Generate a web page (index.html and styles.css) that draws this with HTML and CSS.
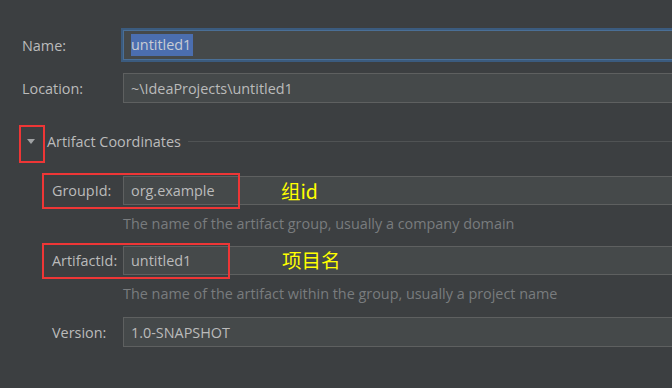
FILE: index.html
```html
<!DOCTYPE html>
<html lang="en">
  <head>
    <meta charset="utf-8" />
    <title>New Project</title>
    <link rel="stylesheet" href="styles.css">
  </head>
  <body>
    <section class="form">
      <div class="row top">
        <label class="label">Name:</label>
        <div class="field focused"><span class="selected">untitled1</span></div>
      </div>
      <div class="row top gap">
        <label class="label">Location:</label>
        <div class="field">~\IdeaProjects\untitled1</div>
      </div>

      <div class="group-title">
        <span class="toggle"></span>
        <span class="title">Artifact Coordinates</span>
        <span class="rule"></span>
        <!-- annotation -->
        <span class="mark mark-toggle"></span>
      </div>

      <div class="group">
        <div class="row sub">
          <label class="label">GroupId:</label>
          <div class="field">org.example</div>
          <span class="mark mark-group"></span>
          <span class="note note-group">组id</span>
        </div>
        <div class="hint">The name of the artifact group, usually a company domain</div>

        <div class="row sub">
          <label class="label">ArtifactId:</label>
          <div class="field">untitled1</div>
          <span class="mark mark-artifact"></span>
          <span class="note note-artifact">项目名</span>
        </div>
        <div class="hint last">The name of the artifact within the group, usually a project name</div>

        <div class="row sub version">
          <label class="label">Version:</label>
          <div class="field">1.0-SNAPSHOT</div>
        </div>
      </div>
    </section>
  </body>
</html>
```
FILE: styles.css
```css
body,
html {
  margin: 0;
  padding: 0;
  height: 100%;
  overflow: hidden;
  background-color: #3c3f41;
  color: #bbbbbb;
  font-family: "Open Sans", "Noto Sans", "Noto Sans CJK SC", sans-serif;
  font-size: 14.4px;
}

.form {
  padding: 30px 0 0 22px;
}

.row {
  display: flex;
  align-items: stretch;
  position: relative;
}

.row.top .label {
  width: 101px;
}

.row.top.gap {
  margin-top: 13px;
}

.label {
  flex: none;
  display: flex;
  align-items: center;
  white-space: nowrap;
}

.field {
  flex: 1;
  height: 30px;
  box-sizing: border-box;
  display: flex;
  align-items: center;
  padding-left: 7px;
  background-color: #45494a;
  border-top: 1px solid #5e6060;
  border-bottom: 1px solid #5e6060;
  border-left: 1px solid #5e6060;
  white-space: nowrap;
}

.field.focused {
  border-color: #4a6f96;
  box-shadow: 0 0 0 2px #3b5b7e;
}

.selected {
  background-color: #4b6eaf;
  color: #c8ccd4;
  line-height: 22px;
  padding-right: 2px;
}

/* collapsible group header */
.group-title {
  position: relative;
  display: flex;
  align-items: center;
  height: 20px;
  margin-top: 28px;
  margin-left: 5px;
}

.toggle {
  width: 0;
  height: 0;
  border-left: 4px solid transparent;
  border-right: 4px solid transparent;
  border-top: 5px solid #a0a2a4;
  margin-right: 12px;
  margin-top: 1px;
}

.title {
  white-space: nowrap;
}

.rule {
  flex: 1;
  height: 1px;
  background-color: #505354;
  margin-left: 7px;
}

.group {
  margin-top: 25px;
  padding-left: 30px;
}

.row.sub .label {
  width: 71px;
}

.row.sub .field {
  height: 29px;
}

.hint {
  color: #797c7e;
  padding-left: 71px;
  line-height: 20px;
  margin: 9px 0 12px;
  white-space: nowrap;
}

.hint.last {
  margin-bottom: 13px;
}

.row.version .field {
  height: 30px;
}

/* red annotation boxes */
.mark {
  position: absolute;
  border: 2px solid #ee3636;
  box-sizing: border-box;
  pointer-events: none;
}

.mark-toggle {
  left: -8px;
  top: -6px;
  width: 26px;
  height: 38px;
}

.mark-group {
  left: -10px;
  top: -3px;
  width: 198px;
  height: 36px;
}

.mark-artifact {
  left: -10px;
  top: -3px;
  width: 188px;
  height: 36px;
}

/* yellow hand notes */
.note {
  position: absolute;
  color: #ffff00;
  font-family: "Noto Sans CJK SC", "Noto Sans", sans-serif;
  font-size: 19.5px;
  line-height: 24px;
  top: 3px;
}

.note-group {
  left: 229px;
}

.note-artifact {
  left: 230px;
  top: 2px;
}
```
